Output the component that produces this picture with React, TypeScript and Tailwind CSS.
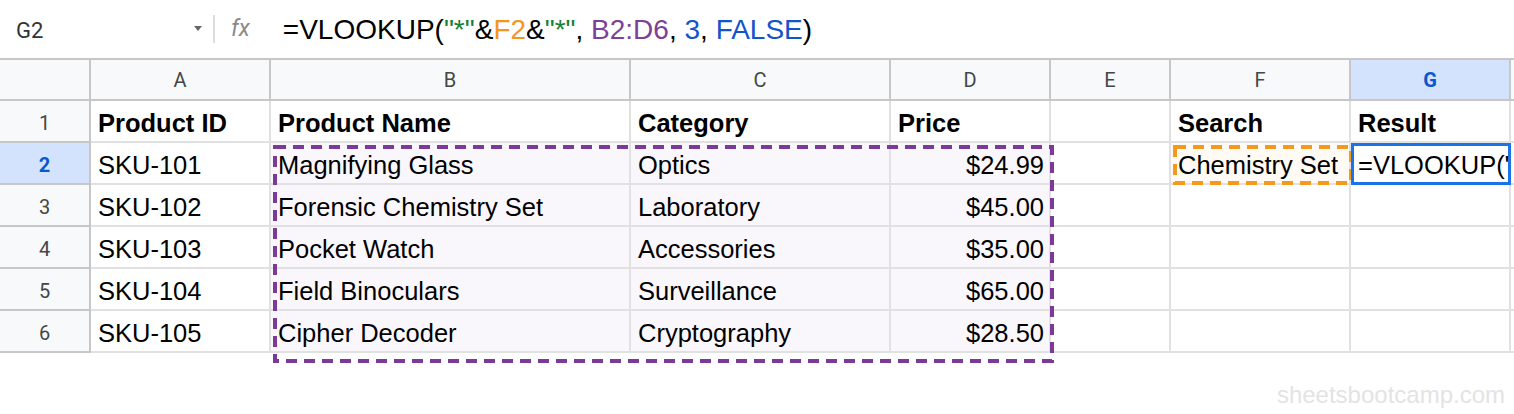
import React from "react";

const cols = ["A", "B", "C", "D", "E", "F", "G"];

type Row = { id: string; name: string; category: string; price: string };

const rows: Row[] = [
  { id: "SKU-101", name: "Magnifying Glass", category: "Optics", price: "$24.99" },
  { id: "SKU-102", name: "Forensic Chemistry Set", category: "Laboratory", price: "$45.00" },
  { id: "SKU-103", name: "Pocket Watch", category: "Accessories", price: "$35.00" },
  { id: "SKU-104", name: "Field Binoculars", category: "Surveillance", price: "$65.00" },
  { id: "SKU-105", name: "Cipher Decoder", category: "Cryptography", price: "$28.50" },
];

const formula = '=VLOOKUP("*"&F2&"*", B2:D6, 3, FALSE)';

function FormulaText() {
  return (
    <span className="whitespace-pre">
      <span>=VLOOKUP(</span>
      <span className="text-[#188038]">"*"</span>
      <span>&amp;</span>
      <span className="text-[#f4951d]">F2</span>
      <span>&amp;</span>
      <span className="text-[#188038]">"*"</span>
      <span>, </span>
      <span className="text-[#7e3f98]">B2:D6</span>
      <span>, </span>
      <span className="text-[#1155cc]">3</span>
      <span>, </span>
      <span className="text-[#1155cc]">FALSE</span>
      <span>)</span>
    </span>
  );
}

function Cell({
  children,
  className = "",
}: {
  children?: React.ReactNode;
  className?: string;
}) {
  return (
    <div
      className={
        "flex items-center overflow-hidden whitespace-nowrap border-r-2 border-b-2 border-[#e1e1e1] pl-[7px] pr-[5px] pt-[5px] text-[25.5px] text-black " +
        className
      }
    >
      {children}
    </div>
  );
}

function RowHead({ n, active = false }: { n: number; active?: boolean }) {
  return (
    <div
      className={
        "flex items-center justify-center border-r-2 border-b-2 border-[#c7c7c7] pt-[4px] font-['Roboto',sans-serif] text-[20px] " +
        (active ? "bg-[#d3e3fd] font-bold text-[#0b57d0]" : "bg-[#f8f9fa] text-[#444746]")
      }
    >
      {n}
    </div>
  );
}

export default function App() {
  return (
    <div className="relative h-[414px] w-[1514px] overflow-hidden bg-white font-['Liberation_Sans',Arial,sans-serif]">
      {/* formula bar */}
      <div className="flex h-[60px] items-center border-b-2 border-[#c7c7c7]">
        <div className="w-[180px] pl-[16px] pt-[2px] font-['Roboto',sans-serif] text-[22px] text-[#333]">G2</div>
        <svg width="8" height="6" viewBox="0 0 8 6" className="ml-[14px]">
          <path d="M0 0 L8 0 L4 5 Z" fill="#666" />
        </svg>
        <div className="ml-[11px] h-[28px] w-[2px] bg-[#dadce0]" />
        <div className="ml-[16px] font-['Roboto',sans-serif] text-[23px] italic text-[#8a8a8a]">fx</div>
        <div className="ml-[33px] pt-[2px] text-[28px] text-black">
          <FormulaText />
        </div>
      </div>

      {/* grid */}
      <div className="relative">
        <div className="grid grid-cols-[91px_180px_360px_260px_160px_120px_180px_160px_3px] grid-rows-[41px_repeat(6,42px)]">
          {/* header row */}
          <div className="border-r-2 border-b-2 border-[#c7c7c7] bg-[#f8f9fa]" />
          {cols.map((c) => (
            <div
              key={c}
              className={
                "flex items-center justify-center border-r-2 border-b-2 border-[#c7c7c7] font-['Roboto',sans-serif] text-[20px] " +
                (c === "G" ? "bg-[#d3e3fd] font-bold text-[#0b57d0]" : "bg-[#f8f9fa] text-[#444746]")
              }
            >
              {c}
            </div>
          ))}
          <div className="border-b-2 border-[#c7c7c7] bg-[#f8f9fa]" />

          {/* row 1 */}
          <RowHead n={1} />
          <Cell className="font-bold">Product ID</Cell>
          <Cell className="font-bold">Product Name</Cell>
          <Cell className="font-bold">Category</Cell>
          <Cell className="font-bold">Price</Cell>
          <Cell />
          <Cell className="font-bold">Search</Cell>
          <Cell className="font-bold">Result</Cell>
          <div className="border-b-2 border-[#e1e1e1]" />

          {rows.map((r, i) => (
            <React.Fragment key={r.id}>
              <RowHead n={i + 2} active={i === 0} />
              <Cell>{r.id}</Cell>
              <Cell className="bg-[#faf7fc]">{r.name}</Cell>
              <Cell className="bg-[#faf7fc]">{r.category}</Cell>
              <Cell className="justify-end bg-[#faf7fc]">{r.price}</Cell>
              <Cell />
              {i === 0 ? (
                <Cell className="bg-[#fffaf3]">Chemistry Set</Cell>
              ) : (
                <Cell />
              )}
              {i === 0 ? <Cell className="pl-[6px]">{formula}</Cell> : <Cell />}
              <div className="border-b-2 border-[#e1e1e1]" />
            </React.Fragment>
          ))}
        </div>

        {/* B2:D6 reference highlight */}
        <svg
          className="pointer-events-none absolute left-[273px] top-[85px]"
          width="781"
          height="218"
          viewBox="0 0 781 218"
        >
          <rect x="2" y="2" width="777" height="214" fill="none" stroke="#7b3a98" strokeWidth="4" strokeDasharray="11 7" />
        </svg>

        {/* F2 reference highlight */}
        <svg
          className="pointer-events-none absolute left-[1173px] top-[85px]"
          width="180"
          height="40"
          viewBox="0 0 180 40"
        >
          <rect x="2" y="2" width="176" height="36" fill="none" stroke="#f39a1e" strokeWidth="4" strokeDasharray="11 7" />
        </svg>

        {/* active cell */}
        <div className="pointer-events-none absolute left-[1351px] top-[83px] h-[42px] w-[160px] border-[3px] border-[#1a73e8]" />
      </div>

      {/* watermark */}
      <div className="flex justify-end pr-[9px] pt-[30px] text-[24px] leading-none text-[#e3e3e3]">
        sheetsbootcamp.com
      </div>
    </div>
  );
}
